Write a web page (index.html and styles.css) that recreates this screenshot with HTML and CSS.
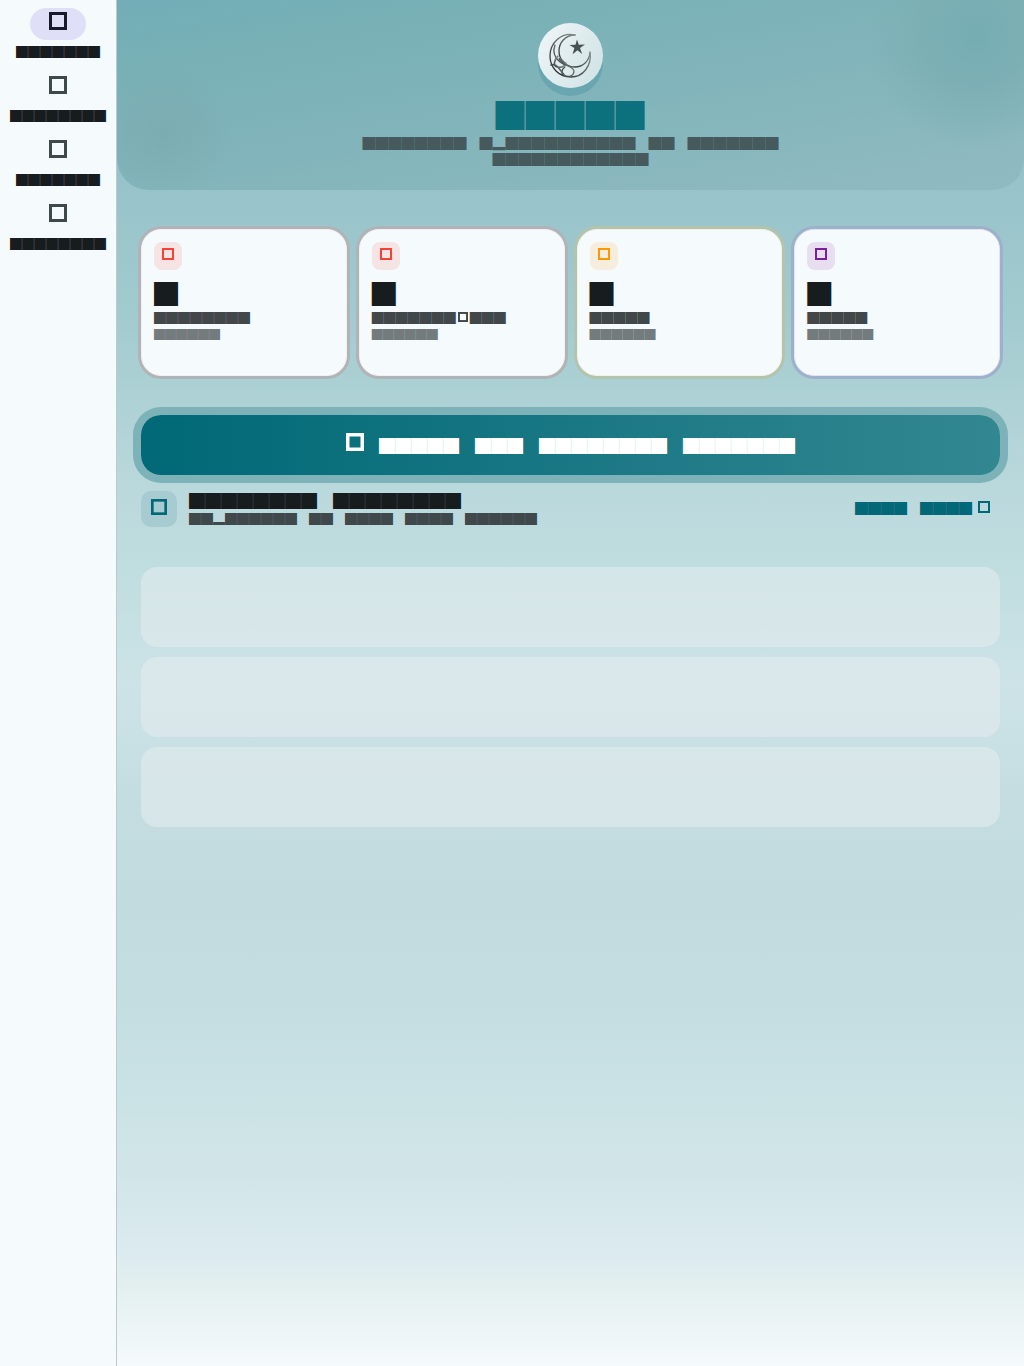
FILE: index.html
```
<!DOCTYPE html>
<html lang="en">
<head>
<meta charset="utf-8">
<meta name="viewport" content="width=device-width, initial-scale=1">
<title>█████</title>
<link rel="stylesheet" href="styles.css">
</head>
<body>
<svg class="defs" width="0" height="0" aria-hidden="true">
  <symbol id="box" viewBox="0 0 18 18"><rect x="1.5" y="1.5" width="15" height="15" fill="none" stroke="currentColor"/></symbol>
</svg>
<div class="app">
  <nav class="rail">
    <a class="rail-item active" href="#home"><span class="pill"><svg class="icon-m"><use href="#box"/></svg></span><span class="rail-label">███████</span></a>
    <a class="rail-item" href="#second"><span class="pill"><svg class="icon-m"><use href="#box"/></svg></span><span class="rail-label">████████</span></a>
    <a class="rail-item" href="#third"><span class="pill"><svg class="icon-m"><use href="#box"/></svg></span><span class="rail-label">███████</span></a>
    <a class="rail-item" href="#fourth"><span class="pill"><svg class="icon-m"><use href="#box"/></svg></span><span class="rail-label">████████</span></a>
  </nav>
  <main class="main">
    <header class="hero">
      <div class="logo">
        <svg viewBox="0 0 65 65" fill="none" stroke-linecap="round">
          <defs><linearGradient id="ink" x1="0" y1="1" x2="1" y2="0"><stop offset="0" stop-color="#182023"/><stop offset="1" stop-color="#a3aaa8"/></linearGradient></defs>
          <g stroke="url(#ink)" stroke-width="1.3">
            <path d="M37 12C23 9 12 20 12 33c0 12 9 21 21 21 12 0 21-11 19-25"/>
            <path d="M37 12C27 12 21 20 21 28c0 9 7 16 16 16 8 0 14-6 15-14"/>
            <path d="M17 22c-3 8 0 13 5 17 5 4 13 4 14 9 0 5-5 6-9 5-5-2-3-7 0-9"/>
            <path d="M20 33c-4 4-5 10-1 11 5 1 8-1 9-4M13 42c3-1 5 0 7 2l7 9" stroke-width="1.6"/>
            <path d="M22 36l5 5" stroke-width="3"/>
          </g>
          <path fill="#465255" d="M39 16.500l1.800 5.300 6.200-.300-5 3.500 2.200 6-4.700-3.700-4.900 3.900 1.700-6.100-4.800-3.200 6-.100z"/>
        </svg>
      </div>
      <h1 class="brand">█████</h1>
      <p class="tagline">████████　█▂██████████　██　███████ ████████████</p>
    </header>
    <div class="content">
      <section class="stats">
        <article class="card red"><span class="badge"><svg class="icon-s"><use href="#box"/></svg></span><strong class="value">█</strong><span class="name">████████</span><span class="note">██████</span></article>
        <article class="card red"><span class="badge"><svg class="icon-s"><use href="#box"/></svg></span><strong class="value">█</strong><span class="name">███████<svg class="icon-xs"><use href="#box"/></svg>███</span><span class="note">██████</span></article>
        <article class="card amber"><span class="badge"><svg class="icon-s"><use href="#box"/></svg></span><strong class="value">█</strong><span class="name">█████</span><span class="note">██████</span></article>
        <article class="card purple"><span class="badge"><svg class="icon-s"><use href="#box"/></svg></span><strong class="value">█</strong><span class="name">█████</span><span class="note">██████</span></article>
      </section>
      <button class="cta" type="button"><svg class="icon-m"><use href="#box"/></svg><span>█████　███　████████　███████</span></button>
      <section class="recent">
        <div class="recent-head">
          <span class="recent-badge"><svg class="icon-l"><use href="#box"/></svg></span>
          <div class="recent-text">
            <h2 class="recent-title">████████　████████</h2>
            <p class="recent-sub">██▂██████　██　████　████　██████</p>
          </div>
          <a class="more" href="#all"><span>████　████</span><svg class="icon-s"><use href="#box"/></svg></a>
        </div>
        <ul class="rows"><li class="row"></li><li class="row"></li><li class="row"></li></ul>
      </section>
    </div>
  </main>
</div>
</body>
</html>
```
FILE: styles.css
```
* { box-sizing: border-box; }
body {
  margin: 0;
  font-family: "Noto Sans CJK JP", "Noto Sans CJK SC", sans-serif;
  color: #171d1f;
}
h1, h2, p, ul { margin: 0; padding: 0; font-weight: 400; }
a { color: inherit; text-decoration: none; }
.defs { position: absolute; }
.icon-xs { width: 10px; height: 10px; stroke-width: 4px; }
.icon-s { width: 12px; height: 12px; stroke-width: 3px; }
.icon-l { width: 16px; height: 16px; stroke-width: 3px; }
.icon-m { width: 18px; height: 18px; stroke-width: 3px; }

.app { display: flex; min-height: 100vh; }
.rail {
  flex: 0 0 117px;
  display: flex;
  flex-direction: column;
  gap: 12px;
  padding: 8px 0;
  background: #f5fafd;
  border-right: 1px solid #bfc8cb;
}
.rail-item { display: flex; flex-direction: column; align-items: center; gap: 4px; color: #3f484b; }
.pill { display: flex; justify-content: center; width: 56px; height: 32px; padding-top: 4px; border-radius: 16px; }
.active .pill { background: #dfe0f8; color: #181a2c; }
.rail-label { font-size: 12px; line-height: 16px; color: #171d1f; }

.main {
  flex: 1;
  min-width: 0;
  background: linear-gradient(#85b8c0 0%, #98c3ca 14%, #a2cbcf 23%, #afd2d6 30%, #bcdadd 37%, #c0dddf 42%, #cde3e7 50%, #c5dde1 58%, #c2dbdf 66%, #c4dde0 73%, #cae2e5 80%, #d3e6e9 87%, #dcebf0 92%, #e3efef 94%, #f5fafd 100%);
}
.hero {
  display: flex;
  flex-direction: column;
  align-items: center;
  min-height: 190px;
  padding: 23px 24px 22px;
  border-radius: 0 0 32px 32px;
  text-align: center;
  background:
    radial-gradient(circle 108px at calc(100% - 48px) 40px, #70a9afb3, #78acb199 50%, #84b3b900),
    radial-gradient(circle 68px at 48px 132px, #7ba9b0b3, #7cacb299 40%, #7eb0b600),
    linear-gradient(170deg, #72adb8, #77b0b5 18%, #82b5bb 55%, #91bac1);
}
.logo {
  width: 65px;
  height: 65px;
  border-radius: 50%;
  background: linear-gradient(120deg, #f0f6f8, #cfe2e4);
  box-shadow: 0 8px 0 #69a6af;
}
.logo svg { display: block; width: 65px; height: 65px; }
.brand { margin-top: 8px; font-size: 29px; line-height: 36px; letter-spacing: 1px; color: #0c717d; }
.tagline { max-width: 440px; margin-top: 3px; font-size: 13px; line-height: 16px; color: #465a5e; }

.content { padding: 39px 24px 24px; }
.stats { display: grid; grid-template-columns: repeat(4, 1fr); gap: 12px; }
.card {
  display: flex;
  flex-direction: column;
  align-items: flex-start;
  min-height: 147px;
  padding: 12px;
  border: 1px solid;
  border-radius: 20px;
  background: #f5fafd;
}
.red { border-color: #f5eef1; box-shadow: 0 0 0 3px #afb5b7; --tint: #f6e4e4; --ink: #f44336; }
.amber { border-color: #f5f1e8; box-shadow: 0 0 0 3px #b2c4ae; --tint: #f6eddd; --ink: #ff9800; }
.purple { border-color: #e8e3f2; box-shadow: 0 0 0 3px #9cb1ca; --tint: #e7dff0; --ink: #7b1fa2; }
.badge {
  display: flex;
  justify-content: center;
  width: 28px;
  height: 28px;
  padding-top: 6px;
  border-radius: 8px;
  background: var(--tint);
  color: var(--ink);
}
.value { margin-top: 8px; font-size: 24px; line-height: 30px; font-weight: 400; }
.name { margin-top: 2px; font-size: 12px; line-height: 16px; color: #42474a; }
.name .icon-xs { margin: 0 2px; vertical-align: 1px; }
.note { font-size: 11px; line-height: 16px; color: #747b7d; }

.cta {
  display: flex;
  align-items: center;
  justify-content: center;
  gap: 15px;
  width: 100%;
  min-height: 60px;
  margin-top: 39px;
  padding: 0;
  border: 0;
  border-radius: 20px;
  background: linear-gradient(90deg, #006876, #328791);
  box-shadow: 0 0 0 8px #7db2b9;
  color: #fff;
  font: inherit;
  font-size: 16px;
  line-height: 20px;
}
.cta .icon-m { margin-bottom: 6px; stroke-width: 4px; }

.recent-head { display: flex; align-items: center; gap: 12px; margin-top: 16px; }
.recent-badge {
  display: flex;
  justify-content: center;
  width: 36px;
  height: 36px;
  padding-top: 8px;
  border-radius: 10px;
  background: #a6cbd0;
  color: #006876;
}
.recent-text { flex: 1; min-width: 0; }
.recent-title { font-size: 16px; line-height: 18px; }
.recent-sub { margin-top: 2px; font-size: 12px; line-height: 16px; color: #3f484b; }
.more { display: flex; align-items: center; gap: 6px; margin-right: 10px; padding-bottom: 2px; font-size: 13px; line-height: 16px; color: #006876; }
.more .icon-s { margin-bottom: 2px; }
.rows { display: grid; gap: 10px; margin-top: 40px; list-style: none; }
.row { min-height: 80px; border-radius: 16px; background: #e5ecee8c; }
```
